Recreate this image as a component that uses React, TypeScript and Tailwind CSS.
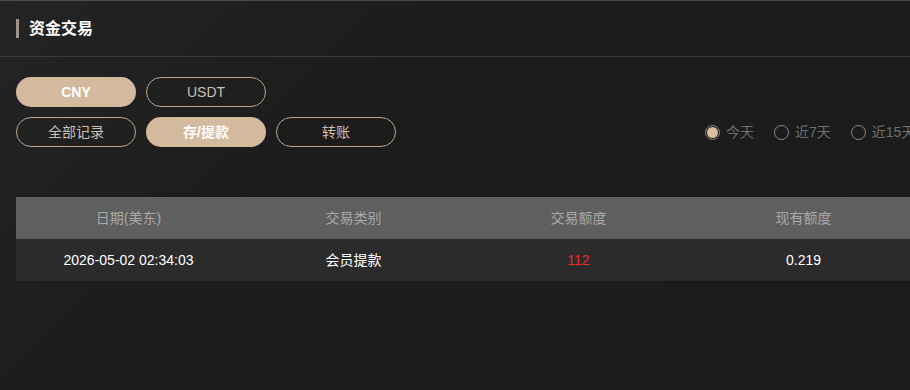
import React from "react";

const font = { fontFamily: '"Liberation Sans", Arial, "Noto Sans CJK SC", sans-serif' };

function Pill({ label, active }: { label: string; active?: boolean }) {
  return (
    <button
      className={
        active
          ? "w-[120px] h-[30px] rounded-full bg-[#d3b99e] text-white font-bold text-[14px] flex items-center justify-center"
          : "w-[120px] h-[30px] rounded-full border border-[#bfa489] text-[#cdbfb1] text-[14px] flex items-center justify-center"
      }
    >
      {label}
    </button>
  );
}

function Radio({ label, checked }: { label: string; checked?: boolean }) {
  return (
    <div className="flex items-center gap-[6px] shrink-0">
      <span className="w-[15px] h-[15px] rounded-full border border-[#8a8a8a] flex items-center justify-center">
        {checked && <span className="w-[11px] h-[11px] rounded-full bg-[#d9bc9c]" />}
      </span>
      <span className="text-[14px] text-[#6f6f6f] whitespace-nowrap">{label}</span>
    </div>
  );
}

export default function App() {
  const cols = ["日期(美东)", "交易类别", "交易额度", "现有额度"];
  return (
    <div
      className="w-[910px] h-[390px] overflow-hidden bg-[linear-gradient(135deg,#242424_0%,#1c1c1c_35%,#1b1b1b_100%)] border-t border-[#4a4a4a]"
      style={font}
    >
      <div className="h-[56px] border-b border-[#3d3833] flex items-center pl-4">
        <span className="w-[3px] h-[19px] bg-[#a39384] mr-[10px]" />
        <span className="text-white font-bold text-[16px]">资金交易</span>
      </div>
      <div className="pl-4 pt-5">
        <div className="flex gap-[10px]">
          <Pill label="CNY" active />
          <Pill label="USDT" />
        </div>
        <div className="flex items-center mt-[10px]">
          <div className="flex gap-[10px]">
            <Pill label="全部记录" />
            <Pill label="存/提款" active />
            <Pill label="转账" />
          </div>
          <div className="flex items-center gap-[20px] ml-[309px]">
            <Radio label="今天" checked />
            <Radio label="近7天" />
            <Radio label="近15天" />
          </div>
        </div>
        <div className="mt-[50px] w-[900px]">
          <div className="grid grid-cols-4 h-[42px] bg-[#5f5f5f] items-center text-center text-[14px] text-[#a9a9a9]">
            {cols.map((c) => (
              <div key={c}>{c}</div>
            ))}
          </div>
          <div className="grid grid-cols-4 h-[42px] bg-[#2b2b2b] items-center text-center text-[14px] text-white">
            <div>2026-05-02 02:34:03</div>
            <div>会员提款</div>
            <div className="text-[#ef2a2a]">112</div>
            <div>0.219</div>
          </div>
        </div>
      </div>
    </div>
  );
}
